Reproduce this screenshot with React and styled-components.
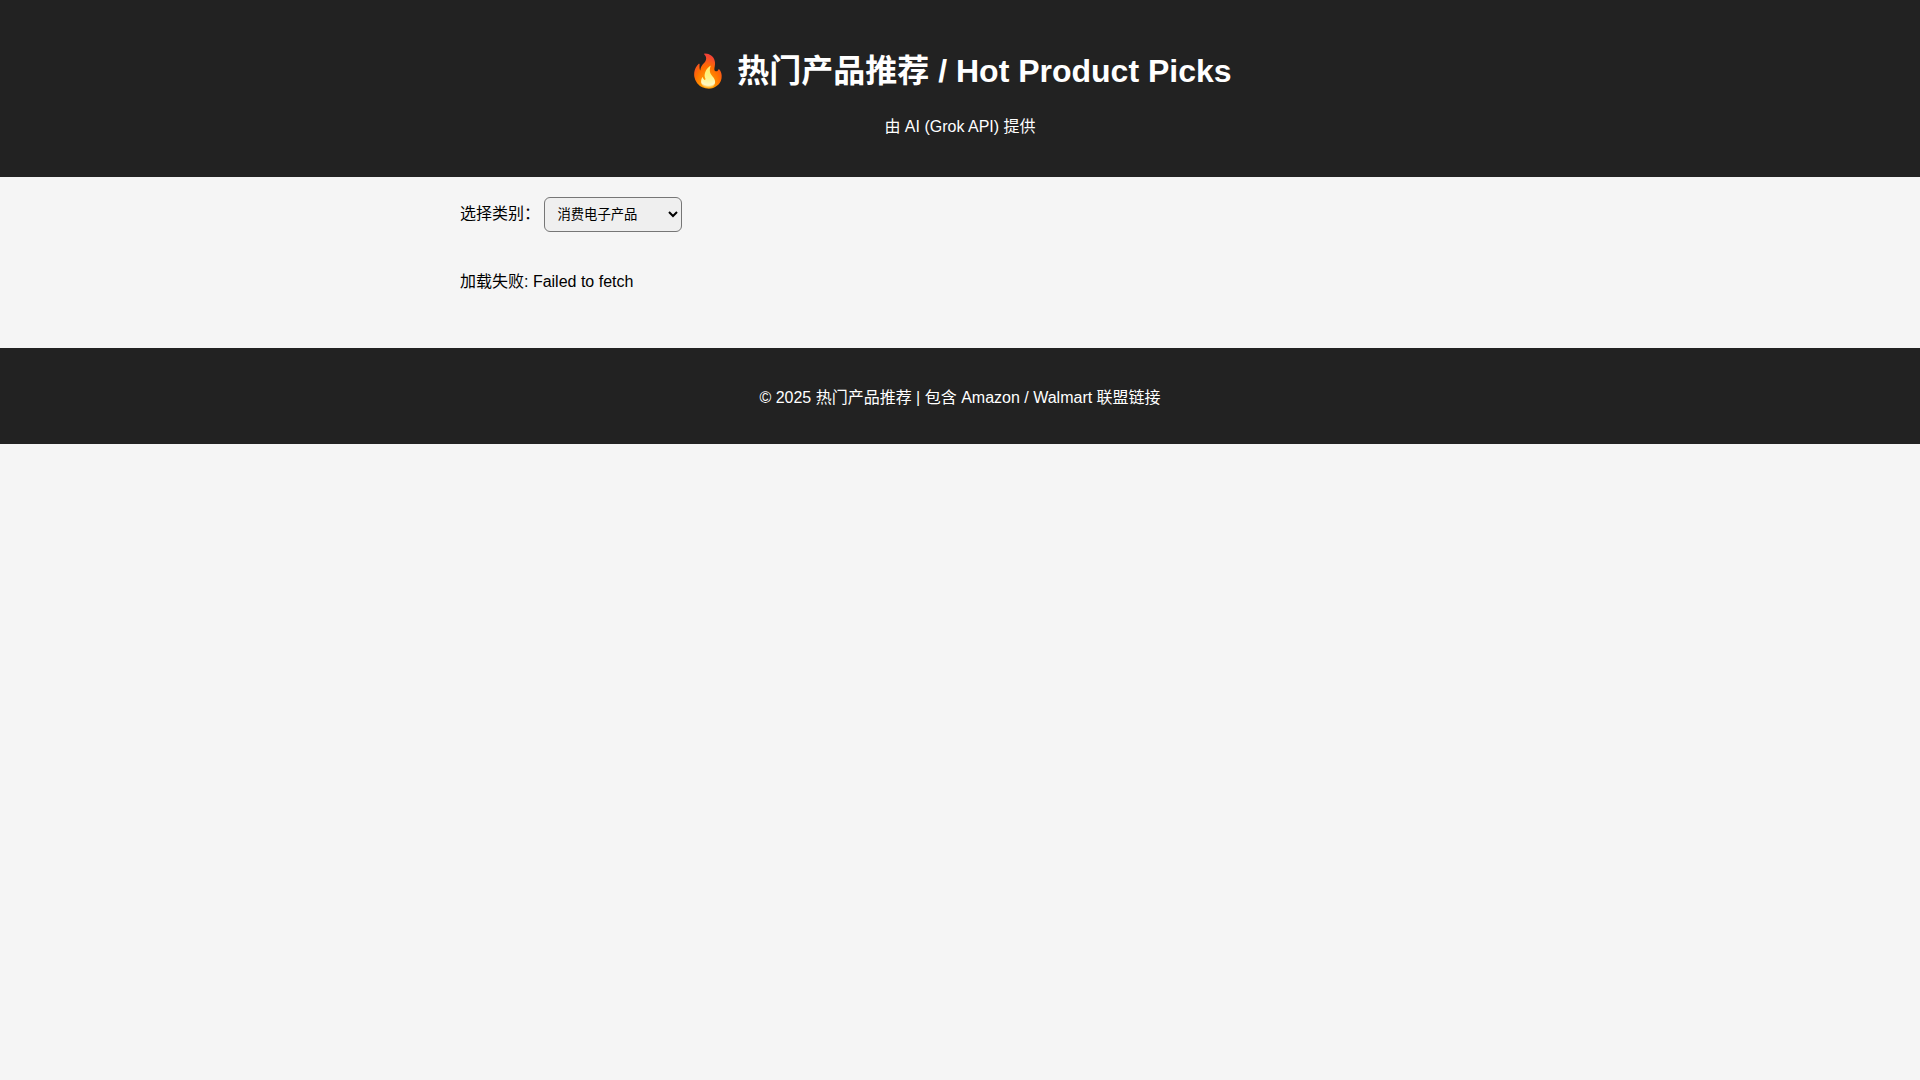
import React, { useState } from 'react';
import styled, { createGlobalStyle } from 'styled-components';

const GlobalStyle = createGlobalStyle`
  body {
    margin: 0;
    background: #f5f5f5;
    font-family: Arial, "Liberation Sans", "Noto Sans CJK SC", sans-serif;
  }
`;

const Header = styled.header`
  padding: 24px;
  background: #222;
  color: #fff;
  text-align: center;
`;

const Title = styled.h1`
  margin: 21px 0 22px;
  font-size: 32px;
`;

const Text = styled.p`
  margin: 16px 0;
  font-size: 16px;
`;

const Main = styled.main`
  max-width: 1000px;
  margin: 0 auto;
`;

const Filter = styled.div`
  padding: 20px 0;
`;

const CategorySelect = styled.select`
  min-width: 138px;
  padding: 8px;
  border-radius: 6px;
  font-family: inherit;
`;

const Results = styled.section`
  padding-bottom: 40px;
`;

const Footer = styled.footer`
  padding: 20px;
  background: #222;
  color: #fff;
  text-align: center;
`;

const categories = ['消费电子产品', '家居与厨房', '美容与个人护理'];

function App() {
  const [category, setCategory] = useState(categories[0]);

  return (
    <>
      <GlobalStyle />
      <Header>
        <Title>🔥 热门产品推荐 / Hot Product Picks</Title>
        <Text>由 AI (Grok API) 提供</Text>
      </Header>
      <Main lang="zh-CN">
        <Filter>
          <label htmlFor="category">选择类别：</label>{' '}
          <CategorySelect
            id="category"
            value={category}
            onChange={(event) => setCategory(event.target.value)}
          >
            {categories.map((name) => (
              <option key={name}>{name}</option>
            ))}
          </CategorySelect>
        </Filter>
        <Results>
          <Text>加载失败: Failed to fetch</Text>
        </Results>
      </Main>
      <Footer>
        <Text>© 2025 热门产品推荐 | 包含 Amazon / Walmart 联盟链接</Text>
      </Footer>
    </>
  );
}

export default App;
